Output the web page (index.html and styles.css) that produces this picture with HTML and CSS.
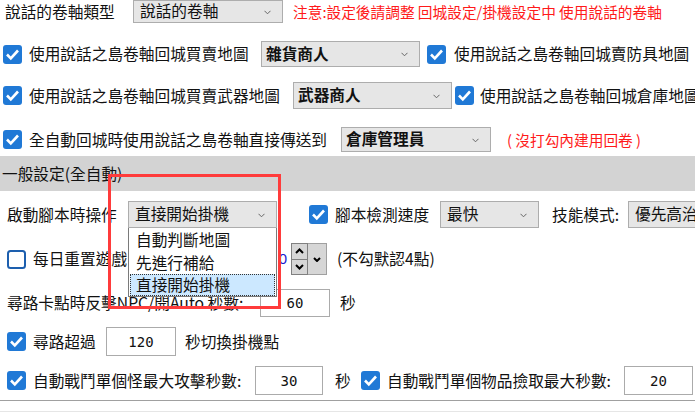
FILE: index.html
```html
<!DOCTYPE html>
<html lang="zh-Hant">
<head>
<meta charset="utf-8">
<link rel="stylesheet" href="styles.css">
</head>
<body>
<div class="page">
  <div class="row r1">
    <span class="txt w-r1l ml5">說話的卷軸類型</span>
    <div class="select w150">說話的卷軸<svg class="arrow" width="7" height="5" viewBox="0 0 7 5"><polyline points="0.5,0.8 3.5,3.8 6.5,0.8" fill="none" stroke="#666" stroke-width="1"/></svg></div>
    <span class="note ml10">注意:設定後請調整 回城設定/掛機設定中 使用說話的卷軸</span>
  </div>

  <div class="row r2">
    <svg class="cb ml3" width="19" height="19" viewBox="0 0 19 19"><rect x="0" y="0" width="19" height="19" rx="3" fill="#2079d6"/><polyline points="4,9.5 7.8,13.3 15,5.5" fill="none" stroke="#fff" stroke-width="2.6"/></svg>
    <span class="txt w-r2t ml7">使用說話之島卷軸回城買賣地圖</span>
    <div class="select bold w159">雜貨商人<svg class="arrow" width="7" height="5" viewBox="0 0 7 5"><polyline points="0.5,0.8 3.5,3.8 6.5,0.8" fill="none" stroke="#666" stroke-width="1"/></svg></div>
    <svg class="cb ml7" width="19" height="19" viewBox="0 0 19 19"><rect x="0" y="0" width="19" height="19" rx="3" fill="#2079d6"/><polyline points="4,9.5 7.8,13.3 15,5.5" fill="none" stroke="#fff" stroke-width="2.6"/></svg>
    <span class="txt ml8">使用說話之島卷軸回城賣防具地圖</span>
  </div>

  <div class="row r3">
    <svg class="cb ml3" width="19" height="19" viewBox="0 0 19 19"><rect x="0" y="0" width="19" height="19" rx="3" fill="#2079d6"/><polyline points="4,9.5 7.8,13.3 15,5.5" fill="none" stroke="#fff" stroke-width="2.6"/></svg>
    <span class="txt w-r3t ml7">使用說話之島卷軸回城買賣武器地圖</span>
    <div class="select bold w159">武器商人<svg class="arrow" width="7" height="5" viewBox="0 0 7 5"><polyline points="0.5,0.8 3.5,3.8 6.5,0.8" fill="none" stroke="#666" stroke-width="1"/></svg></div>
    <svg class="cb ml3" width="19" height="19" viewBox="0 0 19 19"><rect x="0" y="0" width="19" height="19" rx="3" fill="#2079d6"/><polyline points="4,9.5 7.8,13.3 15,5.5" fill="none" stroke="#fff" stroke-width="2.6"/></svg>
    <span class="txt ml6">使用說話之島卷軸回城倉庫地圖</span>
  </div>

  <div class="row r4">
    <svg class="cb ml3" width="19" height="19" viewBox="0 0 19 19"><rect x="0" y="0" width="19" height="19" rx="3" fill="#2079d6"/><polyline points="4,9.5 7.8,13.3 15,5.5" fill="none" stroke="#fff" stroke-width="2.6"/></svg>
    <span class="txt w-r4t ml7">全自動回城時使用說話之島卷軸直接傳送到</span>
    <div class="select bold w150">倉庫管理員<svg class="arrow" width="7" height="5" viewBox="0 0 7 5"><polyline points="0.5,0.8 3.5,3.8 6.5,0.8" fill="none" stroke="#666" stroke-width="1"/></svg></div>
    <span class="note ml16">( 沒打勾內建用回卷 )</span>
  </div>

  <div class="band">一般設定(全自動)</div>

  <div class="row r5">
    <span class="txt w-r5l ml7">啟動腳本時操作</span>
    <div class="select w149">直接開始掛機<svg class="arrow" width="7" height="5" viewBox="0 0 7 5"><polyline points="0.5,0.8 3.5,3.8 6.5,0.8" fill="none" stroke="#666" stroke-width="1"/></svg></div>
    <svg class="cb ml32" width="19" height="19" viewBox="0 0 19 19"><rect x="0" y="0" width="19" height="19" rx="3" fill="#2079d6"/><polyline points="4,9.5 7.8,13.3 15,5.5" fill="none" stroke="#fff" stroke-width="2.6"/></svg>
    <span class="txt w-r5t ml7">腳本檢測速度</span>
    <div class="select w99">最快<svg class="arrow" width="7" height="5" viewBox="0 0 7 5"><polyline points="0.5,0.8 3.5,3.8 6.5,0.8" fill="none" stroke="#666" stroke-width="1"/></svg></div>
    <span class="txt w-r5s ml13">技能模式:</span>
    <div class="select w120">優先高治癒</div>
  </div>

  <div class="row r6">
    <svg class="cb ml7" width="19" height="19" viewBox="0 0 19 19"><rect x="1" y="1" width="17" height="17" rx="2.5" fill="#fff" stroke="#1d5fae" stroke-width="2"/></svg>
    <span class="txt w-r6t ml7">每日重置遊戲</span>
    <div class="timefield">0</div>
    <div class="spin">
      <div class="spinbtn"><svg width="9" height="6" viewBox="0 0 9 6"><polyline points="1,5 4.5,1.5 8,5" fill="none" stroke="#000" stroke-width="2"/></svg></div>
      <div class="spinbtn"><svg width="9" height="6" viewBox="0 0 9 6"><polyline points="1,1 4.5,4.5 8,1" fill="none" stroke="#000" stroke-width="2"/></svg></div>
    </div>
    <div class="ddbtn"><svg width="8" height="5" viewBox="0 0 8 5"><polyline points="1,1 4,4 7,1" fill="none" stroke="#000" stroke-width="2"/></svg></div>
    <span class="txt ml10">(不勾默認4點)</span>
  </div>

  <div class="row r7">
    <span class="txt w-r7l ml7">尋路卡點時反擊NPC/開Auto 秒數:</span>
    <div class="input w70">60</div>
    <span class="txt ml10">秒</span>
  </div>

  <div class="row r8">
    <svg class="cb ml7" width="19" height="19" viewBox="0 0 19 19"><rect x="0" y="0" width="19" height="19" rx="3" fill="#2079d6"/><polyline points="4,9.5 7.8,13.3 15,5.5" fill="none" stroke="#fff" stroke-width="2.6"/></svg>
    <span class="txt w-r8t ml7">尋路超過</span>
    <div class="input w70">120</div>
    <span class="txt ml9">秒切換掛機點</span>
  </div>

  <div class="row r9">
    <svg class="cb ml7" width="19" height="19" viewBox="0 0 19 19"><rect x="0" y="0" width="19" height="19" rx="3" fill="#2079d6"/><polyline points="4,9.5 7.8,13.3 15,5.5" fill="none" stroke="#fff" stroke-width="2.6"/></svg>
    <span class="txt w-r9t ml7">自動戰鬥單個怪最大攻擊秒數:</span>
    <div class="input w68">30</div>
    <span class="txt w-r9s ml12">秒</span>
    <svg class="cb ml7" width="19" height="19" viewBox="0 0 19 19"><rect x="0" y="0" width="19" height="19" rx="3" fill="#2079d6"/><polyline points="4,9.5 7.8,13.3 15,5.5" fill="none" stroke="#fff" stroke-width="2.6"/></svg>
    <span class="txt w-r9u ml7">自動戰鬥單個物品撿取最大秒數:</span>
    <div class="input w69">20</div>
  </div>

  <div class="footer"></div>

  <ul class="droplist">
    <li class="item">自動判斷地圖</li>
    <li class="item">先進行補給</li>
    <li class="item selected">直接開始掛機</li>
  </ul>
  <div class="highlight-box"></div>
</div>
</body>
</html>
```
FILE: styles.css
```css
html, body {
  margin: 0;
  padding: 0;
  background: #ffffff;
}
.page {
  position: relative;
  width: 695px;
  height: 413px;
  overflow: hidden;
  display: flex;
  flex-direction: column;
  font-family: "Noto Sans CJK TC", "Noto Sans", sans-serif;
  font-size: 15.7px;
  color: #111;
  white-space: nowrap;
}
.row {
  display: flex;
  align-items: center;
  flex: none;
}
.r1 { height: 23px; margin-top: 0; }
.r2 { height: 26px; margin-top: 18px; }
.r3 { height: 27px; margin-top: 15px; }
.r4 { height: 25px; margin-top: 18px; }
.r5 { height: 27px; margin-top: 10px; }
.r6 { height: 32px; margin-top: 15px; }
.r7 { height: 28px; margin-top: 14px; }
.r8 { height: 29px; margin-top: 10px; }
.r9 { height: 29px; margin-top: 10px; }

.txt {
  flex: none;
  line-height: 20px;
}
.note {
  flex: none;
  color: #ff1a1a;
  font-size: 14.7px;
  line-height: 20px;
}
.cb { flex: none; display: block; }

.ml3 { margin-left: 3px; }
.ml5 { margin-left: 5px; }
.ml6 { margin-left: 6px; }
.ml7 { margin-left: 7px; }
.ml8 { margin-left: 8px; }
.ml9 { margin-left: 9px; }
.ml10 { margin-left: 10px; }
.ml12 { margin-left: 12px; }
.ml13 { margin-left: 13px; }
.ml16 { margin-left: 16px; }
.ml32 { margin-left: 32px; }

.w-r1l { width: 128px; }
.w-r2t { width: 232px; }
.w-r3t { width: 264px; }
.w-r4t { width: 312px; }
.w-r5l { width: 121px; }
.w-r5t { width: 105px; }
.w-r5s { width: 76px; }
.w-r6t { width: 150px; }
.w-r7l { width: 253px; }
.w-r8t { width: 73px; }
.w-r9t { width: 222px; }
.w-r9s { width: 19px; }
.w-r9u { width: 237px; }

.select {
  flex: none;
  box-sizing: border-box;
  height: 100%;
  display: flex;
  align-items: center;
  justify-content: space-between;
  padding: 0 11px 1px 6px;
  background: #e6e6e6;
  border: 1px solid #adadad;
  line-height: 20px;
  color: #111;
}
.select.bold { font-weight: bold; padding-left: 4px; }
.arrow { flex: none; display: block; margin-top: 2px; }
.w150 { width: 150px; }
.w159 { width: 159px; }
.w149 { width: 149px; }
.w99 { width: 99px; }
.w120 { width: 120px; }
.w70 { width: 70px; }
.w68 { width: 68px; }
.w69 { width: 69px; }

.band {
  flex: none;
  height: 35px;
  margin-top: 4px;
  background: #d3d3d3;
  display: flex;
  align-items: center;
  padding-left: 2px;
  line-height: 20px;
  color: #111;
}

.timefield {
  flex: none;
  box-sizing: border-box;
  width: 108px;
  height: 100%;
  background: #fff;
  color: #1a1ad0;
  text-align: right;
  padding-right: 4px;
  line-height: 32px;
  font-family: "Liberation Sans", sans-serif;
  font-size: 15px;
}
.spin {
  flex: none;
  width: 17px;
  height: 100%;
  display: flex;
  flex-direction: column;
  box-sizing: border-box;
  border: 1px solid #808080;
  background: #d6d6d6;
}
.spinbtn {
  flex: 1;
  display: flex;
  align-items: center;
  justify-content: center;
}
.spinbtn + .spinbtn { border-top: 1px solid #808080; }
.ddbtn {
  flex: none;
  box-sizing: border-box;
  width: 19px;
  height: 100%;
  background: #d6d6d6;
  border: 1px solid #a0a0a0;
  border-left: none;
  display: flex;
  align-items: center;
  justify-content: center;
}

.input {
  flex: none;
  box-sizing: border-box;
  height: 100%;
  background: #fff;
  border: 1px solid #ababab;
  display: flex;
  align-items: center;
  justify-content: center;
  font-family: "DejaVu Sans Mono", monospace;
  font-size: 14px;
  color: #111;
}

.footer {
  flex: none;
  margin-top: 5px;
  height: 10px;
  border-top: 1px solid #a0a0a0;
  border-bottom: 1px solid #e6e6e6;
}

.droplist {
  position: absolute;
  left: 128px;
  top: 228px;
  width: 149px;
  height: 69px;
  box-sizing: border-box;
  margin: 0;
  padding: 0 1px;
  list-style: none;
  background: #fff;
  border: 1px solid #7a7a7a;
  border-top: none;
}
.item {
  height: 23px;
  line-height: 23px;
  padding-left: 6px;
  box-sizing: border-box;
}
.item.selected {
  background: #cce8ff;
  outline: 1px dotted #333;
  outline-offset: -1px;
  height: 22px;
  line-height: 22px;
}
.highlight-box {
  position: absolute;
  left: 108px;
  top: 174px;
  width: 173px;
  height: 135px;
  box-sizing: border-box;
  border: 3px solid #ff3b3b;
}
```
